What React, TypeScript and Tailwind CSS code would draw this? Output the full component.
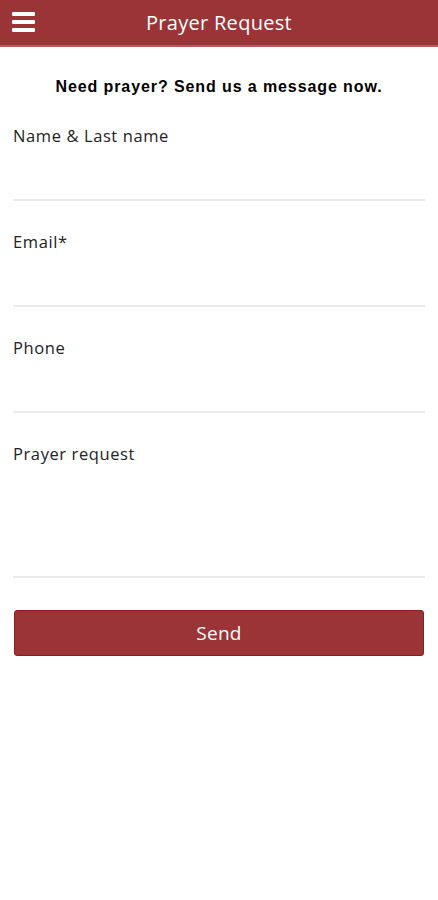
import React from 'react';

const fields = [
  { label: 'Name & Last name', h: 'h-[65px]' },
  { label: 'Email*', h: 'h-[65px]' },
  { label: 'Phone', h: 'h-[65px]' },
  { label: 'Prayer request', h: 'h-[124px]' },
];

export default function App() {
  return (
    <div className="w-[438px] h-[900px] bg-white" style={{ fontFamily: '"Open Sans", sans-serif' }}>
      <header className="h-[47px] bg-[#9a3436] border-b-2 border-[#b85a5c] flex items-center relative">
        <button type="button" className="absolute left-[12px] top-[12px] flex flex-col gap-[4px]" aria-label="Menu">
          <span className="block w-[23px] h-[4px] bg-white rounded-[1px]" />
          <span className="block w-[23px] h-[4px] bg-white rounded-[1px]" />
          <span className="block w-[23px] h-[4px] bg-white rounded-[1px]" />
        </button>
        <h1 className="w-full text-center text-white text-[20px] tracking-[0.3px] leading-none">Prayer Request</h1>
      </header>

      <p
        className="text-center text-[16px] font-bold text-black mt-[31px] leading-[18px] tracking-[0.9px]"
        style={{ fontFamily: '"Liberation Sans", Arial, sans-serif' }}
      >
        Need prayer? Send us a message now.
      </p>

      <form className="px-[13px] mt-[30px]">
        {fields.map((f, i) => (
          <div key={f.label} className={i === 0 ? '' : 'mt-[31px]'}>
            <label className="block text-[16.5px] tracking-[0.6px] leading-[20px] text-[#222]">{f.label}</label>
            <div className={`${f.h} border-b-2 border-[#ebebeb] -mt-[10px]`} />
          </div>
        ))}
        <button
          type="button"
          className="mt-[32px] ml-[1px] w-[410px] h-[46px] rounded-[3px] bg-[#9a3436] border border-[#8a1f22] text-white text-[19px] tracking-[0.3px]"
        >
          Send
        </button>
      </form>
    </div>
  );
}
